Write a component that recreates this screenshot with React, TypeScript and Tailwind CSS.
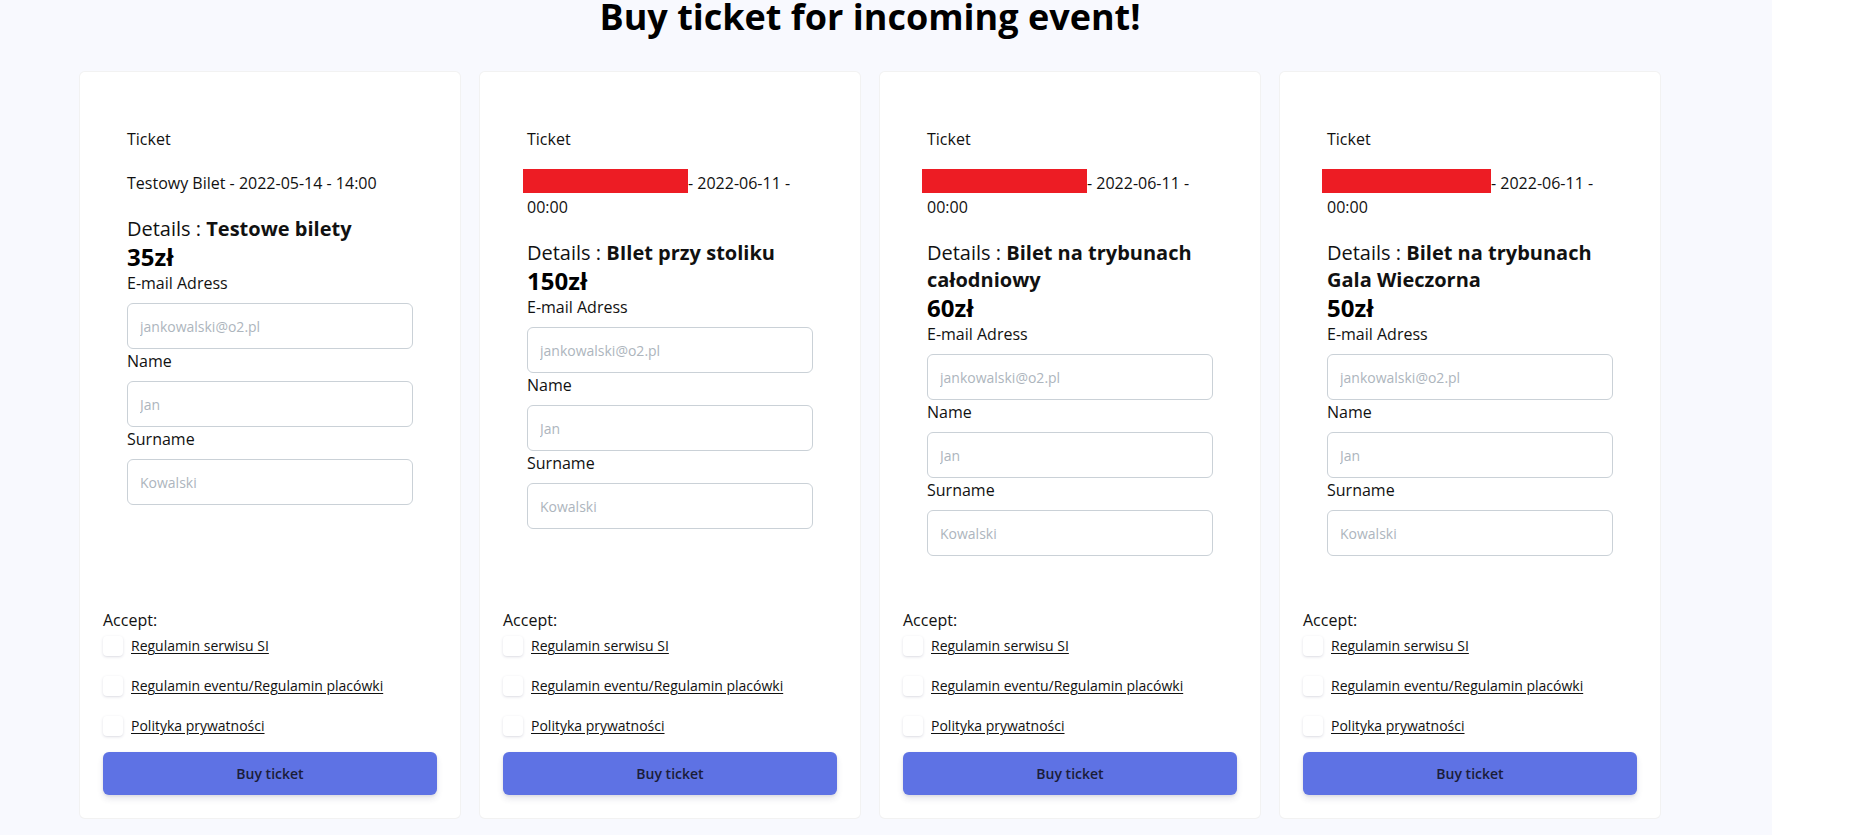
import React from 'react';

interface Ticket {
  name?: string;
  redact?: { ml: string; w: string };
  date: string;
  details: string;
  price: string;
}

const tickets: Ticket[] = [
  { name: 'Testowy Bilet', date: '2022-05-14 - 14:00', details: 'Testowe bilety', price: '35zł' },
  { redact: { ml: '-ml-[4px]', w: 'w-[165px]' }, date: '2022-06-11 - 00:00', details: 'BIlet przy stoliku', price: '150zł' },
  { redact: { ml: '-ml-[5px]', w: 'w-[165px]' }, date: '2022-06-11 - 00:00', details: 'Bilet na trybunach całodniowy', price: '60zł' },
  { redact: { ml: '-ml-[5px]', w: 'w-[169px]' }, date: '2022-06-11 - 00:00', details: 'Bilet na trybunach Gala Wieczorna', price: '50zł' }
];

const Field: React.FC<{ label: string; placeholder: string }> = ({ label, placeholder }) => (
  <div>
    <label className="block text-[16px] leading-[24px] text-[#111]">{label}</label>
    <input
      type="text"
      placeholder={placeholder}
      className="mt-2 w-full h-[46px] px-3 rounded-md border border-[#cad1d7] bg-white text-[14px] text-[#525f7f] placeholder:text-[#adb5bd] focus:outline-none"
    />
  </div>
);

const TicketCard: React.FC<{ t: Ticket }> = ({ t }) => (
  <div className="w-[382px] h-[748px] bg-white rounded-md border border-black/5 p-[23px] flex flex-col justify-between">
    <div className="px-6 pt-8">
      <div className="text-[16px] leading-[24px] text-[#111]">Ticket</div>
      <div className="mt-5 text-[16px] leading-[24px] text-[#111]">
        {t.redact ? (
          <>
            {/* name hidden with a red box, as in the screenshot */}
            <span className={`inline-block align-top h-[24px] bg-[#ed1c24] -translate-y-[2px] ${t.redact.ml} ${t.redact.w}`} />
            - {t.date}
          </>
        ) : (
          <>{t.name} - {t.date}</>
        )}
      </div>
      <div className="mt-[20px] text-[20px] leading-[27px] text-[#111]">
        Details : <span className="font-bold">{t.details}</span>
      </div>
      <div className="text-[24px] leading-[29px] font-bold text-black">{t.price}</div>
      <div className="flex flex-col">
        <Field label="E-mail Adress" placeholder="jankowalski@o2.pl" />
        <Field label="Name" placeholder="Jan" />
        <Field label="Surname" placeholder="Kowalski" />
      </div>
    </div>

    <div>
      <div className="text-[16px] leading-[24px] text-[#111]">Accept:</div>
      <div className="mt-1 flex flex-col gap-5">
        {['Regulamin serwisu SI', 'Regulamin eventu/Regulamin placówki', 'Polityka prywatności'].map(l => (
          <div key={l} className="flex items-center gap-2 h-5">
            <span className="w-5 h-5 bg-white rounded-[4px] shadow-[0_1px_3px_rgba(50,50,93,0.15),0_1px_0_rgba(0,0,0,0.02)]" />
            <a className="text-[14px] leading-[20px] text-[#111] underline underline-offset-2">{l}</a>
          </div>
        ))}
      </div>
      <button className="mt-4 w-full h-[43px] rounded-md bg-[#5e72e4] text-[14px] font-semibold text-[#1b1d3a] shadow-[0_4px_6px_rgba(50,50,93,0.11),0_1px_3px_rgba(0,0,0,0.08)]">
        Buy ticket
      </button>
    </div>
  </div>
);

const App: React.FC = () => {
  return (
    <div className="w-[1772px] h-[835px] bg-[#f8f9fe] font-['Open_Sans',sans-serif]">
      <div className="ml-[79px] w-[1582px]">
        <h1 className="text-center text-[36px] leading-[34px] font-bold text-black">Buy ticket for incoming event!</h1>
        <div className="mt-[37px] flex gap-[18px]">
          {tickets.map((t, i) => (
            <TicketCard key={i} t={t} />
          ))}
        </div>
      </div>
    </div>
  );
};

export default App;
